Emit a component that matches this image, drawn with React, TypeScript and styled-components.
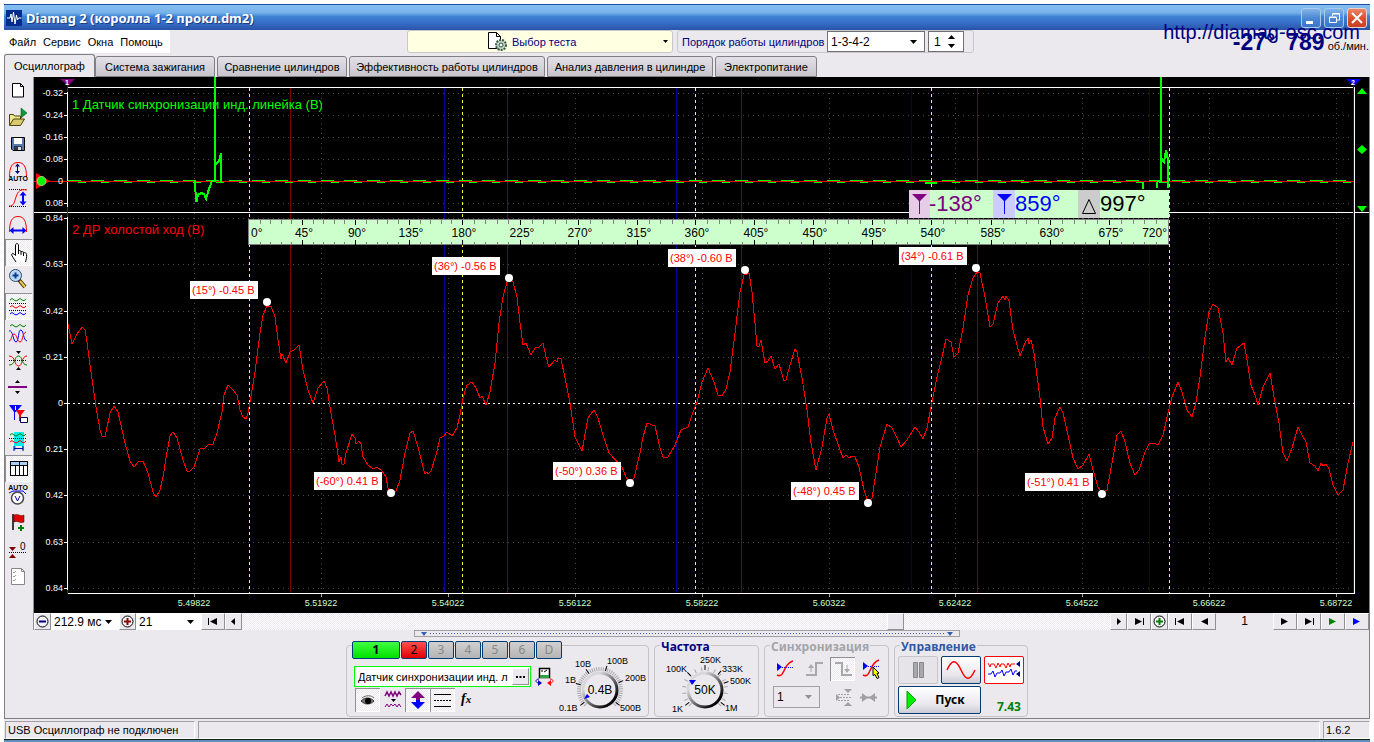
import React from 'react';
import styled, { createGlobalStyle, css } from 'styled-components';

const FACE = '#ebe9ed';
const UI = '"Liberation Sans", Arial, sans-serif';
const HEAD = '"Noto Sans", "Open Sans", sans-serif';
const checker = css`
  background: repeating-conic-gradient(#ffffff 0 25%, #ebe9ed 0 50%) 0 0 / 2px 2px;
`;

const Global = createGlobalStyle`
  * { box-sizing: border-box; }
  body { margin: 0; background: #fff; font: 11px/14px ${UI}; color: #000; }
  button, input, select { font: inherit; color: inherit; margin: 0; padding: 0; border-radius: 0; }
  svg { display: block; }
`;

const Window = styled.div`
  position: relative;
  margin: 4px 4px 0;
  background: ${FACE};
`;

const TitleBar = styled.header`
  display: flex;
  align-items: center;
  gap: 4px;
  height: 26px;
  padding: 0 3px 0 2px;
  border-top: 1px solid #1c50a8;
  background: linear-gradient(#86c0f0 0, #78b2ea 30%, #5c9ce0 38%, #3f82d4 46%, #3670c8 70%, #2a52a8 100%);
`;
const Title = styled.h1`
  flex: 1;
  margin: 0;
  font: bold 13px/18px ${HEAD};
  color: #fff;
  text-shadow: 1px 1px 0 #1a3c88;
`;
const CaptionButtons = styled.div`
  display: flex;
  gap: 3px;
`;
const CaptionButton = styled.button<{ $close?: boolean }>`
  width: 20px;
  height: 20px;
  border: 1px solid ${p => (p.$close ? '#f0d0d0' : '#a8ccf0')};
  border-radius: 3px;
  background: ${p => (p.$close ? 'linear-gradient(#e88868, #dc5030 50%, #c84020)' : 'linear-gradient(#84b4e8, #4c88d4 50%, #3c74c8)')};
`;

const TopRow = styled.div`
  display: flex;
  height: 24px;
  align-items: flex-start;
`;
const Menu = styled.nav`
  display: flex;
  align-items: center;
  gap: 7px;
  width: 166px;
  height: 23px;
  padding-left: 5px;
  background: #fff;
`;
const MenuItem = styled.button`
  border: 0;
  background: none;
`;
const TestButton = styled.button`
  display: flex;
  align-items: center;
  width: 266px;
  height: 23px;
  margin-left: 237px;
  padding: 0 4px 0 79px;
  gap: 4px;
  border: 1px solid #c8c8cc;
  border-radius: 3px;
  background: #ffffe1;
  color: #000080;
`;
const Grow = styled.span`
  flex: 1;
  text-align: left;
`;
const OrderBox = styled.div`
  display: flex;
  align-items: center;
  width: 297px;
  height: 23px;
  margin-left: 4px;
  padding-left: 4px;
  border: 1px solid #c8c8cc;
  border-radius: 3px;
`;
const OrderLabel = styled.label`
  flex: 1;
  color: #000080;
`;
const SelectWrap = styled.span<{ $w: number; $line?: string; $bg?: string; $h?: number }>`
  display: flex;
  position: relative;
  width: ${p => p.$w}px;
  height: ${p => p.$h ?? 17}px;
  border: ${p => (p.$line ? `1px solid ${p.$line}` : '0')};
  background: ${p => p.$bg ?? '#fff'};
`;
const Select = styled.select`
  flex: 1;
  width: 100%;
  padding-left: 3px;
  border: 0;
  background: none;
  appearance: none;
  font-size: 12px;
`;
const Arrow = styled.svg`
  position: absolute;
  right: 7px;
  top: calc(50% - 2px);
  pointer-events: none;
`;
const Spinner = styled.span`
  display: flex;
  align-items: center;
  width: 36px;
  height: 21px;
  margin: 0 9px 0 3px;
  padding-left: 5px;
  border: 1px solid #707074;
  background: #fff;
`;
const SpinInput = styled.input`
  width: 14px;
  border: 0;
  background: none;
  font-size: 12px;
`;
const SpinButton = styled.button`
  display: block;
  width: 10px;
  height: 9px;
  border: 0;
  background: none;
`;
const Rpm = styled.div`
  display: flex;
  align-items: baseline;
  margin-left: auto;
  padding-right: 1px;
  color: #000080;
  font: bold 23px/24px ${UI};
`;
const RpmUnit = styled.span`
  margin-left: 3px;
  color: #000;
  font: 11px/14px ${UI};
`;
const Gap = styled.span`
  width: 11px;
`;
const SiteLink = styled.a`
  position: absolute;
  right: 10px;
  top: 17px;
  z-index: 2;
  font: 20px/22px ${UI};
  color: #000080;
  text-decoration: none;
`;

const Tabs = styled.div`
  display: flex;
  align-items: flex-end;
  gap: 2px;
  height: 23px;
`;
const Tab = styled.button<{ $w: number; $on?: boolean }>`
  width: ${p => p.$w}px;
  height: ${p => (p.$on ? 23 : 21)}px;
  margin-right: ${p => (p.$on ? -2 : 0)}px;
  border: 1px solid #808084;
  border-bottom: ${p => (p.$on ? '0' : '1px solid #808084')};
  border-radius: 3px 3px 0 0;
  background: ${p => (p.$on ? FACE : 'linear-gradient(#e4e2e8, #c8c4cc)')};
`;

const Work = styled.main`
  display: flex;
  border-left: 1px solid #808084;
  border-right: 1px solid #808084;
`;
const Tools = styled.div`
  display: flex;
  flex-direction: column;
  width: 29px;
  border-right: 1px solid #909094;
`;
const ToolButton = styled.button<{ $on?: boolean }>`
  width: 27px;
  height: 27px;
  border: 0;
  background: none;
  ${p => p.$on && css`${checker} box-shadow: inset 1px 1px 0 #909094, inset -1px -1px 0 #fff;`}
  & > svg { margin-left: -1px; }
`;
const Right = styled.div`
  flex: 1;
  min-width: 0;
`;
const Scope = styled.svg`
  width: 100%;
  height: auto;
  background: #000;
  font-family: ${UI};
`;

const NavRow = styled.div`
  display: flex;
  height: 17px;
`;
const NavButton = styled.button<{ $w: number }>`
  display: flex;
  align-items: center;
  justify-content: center;
  width: ${p => p.$w}px;
  height: 17px;
  flex: none;
  background: ${FACE};
  border: 1px solid;
  border-color: #fff #909094 #909094 #fff;
`;
const Track = styled.div`
  flex: 1;
  display: flex;
  justify-content: flex-end;
  padding-right: 206px;
  ${checker}
`;
const Page = styled.span`
  width: 57px;
  text-align: center;
  font-size: 12px;
  line-height: 17px;
`;

const Bottom = styled.section`
  display: flex;
  flex-direction: column;
  align-items: center;
  height: 89px;
  border: solid #808084;
  border-width: 0 1px 1px;
`;
const Splitter = styled.div`
  display: flex;
  align-items: center;
  width: 546px;
  height: 7px;
  padding: 0 5px;
  gap: 3px;
  border: 1px solid #a0a0a4;
`;
const Dots = styled.span`
  flex: 1;
  height: 1px;
  background: repeating-linear-gradient(90deg, #3060b0 0 1px, transparent 1px 3px);
`;
const Groups = styled.div`
  display: flex;
  gap: 5px;
  margin-top: 8px;
`;
const Group = styled.div<{ $w: number; $pad?: string }>`
  position: relative;
  width: ${p => p.$w}px;
  height: 72px;
  padding: ${p => p.$pad ?? '0'};
  border: 1px solid #c4c4c8;
  border-radius: 4px;
`;
const GroupTitle = styled.h2<{ $c: string }>`
  position: absolute;
  left: 5px;
  top: -7px;
  margin: 0;
  padding: 0 1px;
  background: ${FACE};
  color: ${p => p.$c};
  font: bold 12px/16px ${HEAD};
`;
const ChannelGroup = styled(Group)`
  display: flex;
`;
const ChannelSide = styled.div`
  width: 211px;
  flex: none;
`;
const Row = styled.div<{ $gap?: number; $mt?: number; $ml?: number }>`
  display: flex;
  align-items: center;
  gap: ${p => p.$gap ?? 0}px;
  margin-top: ${p => p.$mt ?? 0}px;
  margin-left: ${p => p.$ml ?? 0}px;
`;
const Channel = styled.button<{ $w?: number; $bg?: string }>`
  width: ${p => p.$w ?? 26}px;
  height: 18px;
  border: 1px solid #003c74;
  border-radius: 2px;
  background: ${p => p.$bg ?? 'linear-gradient(#d0d0d0, #b4b4b4)'};
  color: ${p => (p.$bg ? '#000' : '#888')};
  font: ${p => (p.$w ? 'bold' : 'normal')} 12px/14px ${HEAD};
  flex: none;
`;
const Sensor = styled.div`
  display: flex;
  align-items: center;
  width: 177px;
  height: 21px;
  padding: 0 1px 0 3px;
  border: 1px solid #00ff00;
  background: #fff;
`;
const SensorInput = styled.input`
  flex: 1;
  min-width: 0;
  border: 0;
  background: none;
`;
const IconButton = styled.button<{ $w?: number; $h?: number; $on?: boolean }>`
  display: flex;
  align-items: center;
  justify-content: center;
  width: ${p => p.$w ?? 25}px;
  height: ${p => p.$h ?? 24}px;
  border: 0;
  background: none;
  ${p => p.$on && css`${checker} box-shadow: inset 1px 1px 0 #909094, inset -1px -1px 0 #fff;`}
`;
const KnobSvg = styled.svg`
  font: 9px ${UI};
`;
const Command = styled.button<{ $w?: number; $line: string; $bg?: string }>`
  display: flex;
  align-items: center;
  justify-content: center;
  width: ${p => p.$w ?? 40}px;
  height: 28px;
  border: 1px solid ${p => p.$line};
  border-radius: 2px;
  background: ${p => p.$bg ?? 'linear-gradient(#ffffff, #e8e6ec 70%, #cccad4)'};
  font: bold 12px/16px ${HEAD};
`;
const StartText = styled.span`
  margin: 0 8px 0 18px;
`;
const Load = styled.output`
  align-self: flex-end;
  margin-left: 16px;
  color: #008000;
  font: bold 12px/14px ${HEAD};
`;

const Status = styled.footer`
  display: flex;
  gap: 3px;
  height: 20px;
  padding: 2px 0 0 1px;
`;
const StatusCell = styled.div<{ $w?: number }>`
  ${p => (p.$w ? `width: ${p.$w}px;` : 'flex: 1;')}
  padding: 1px 2px;
  border: 1px solid;
  border-color: #a0a0a4 #fff #fff #a0a0a4;
`;
const Strip = styled.div`
  height: 4px;
  border-top: 1px solid #102010;
  background: #6090c0;
`;

/* ---------- oscilloscope data ---------- */

const TRACE =
  '68,324 72,344 77,334 82,327 85,330 87,342 90,365 96,407 100,430 102,436 105,437 110,413 114,406 118,412 125,443 130,461 134,467 138,462 143,461 148,473 153,492 156,497 160,490 163,477 167,452 170,436 173,432 177,438 183,460 187,471 189,472 194,467 200,449 205,448 209,444 213,444 217,433 222,412 224,395 228,385 230,387 233,390 237,395 240,410 243,417 246,419 248,413 250,402 255,372 260,333 263,315 267,306 271,306 275,317 278,340 281,359 282,354 286,363 290,352 294,350 299,345 303,370 308,390 313,403 318,388 324,381 327,388 331,413 335,435 338,455 339,462 341,457 342,464 344,464 346,453 352,434 355,438 356,444 359,441 361,444 363,457 368,465 373,469 377,467 382,471 386,477 388,488 391,493 396,491 400,480 405,453 410,433 413,431 418,447 423,467 425,474 427,472 428,474 431,471 436,455 440,438 444,436 447,432 452,436 457,428 460,415 463,398 467,385 472,382 476,388 480,398 482,396 486,405 490,392 495,363 499,323 503,297 507,282 509,278 513,282 517,297 520,323 523,345 526,343 531,355 535,348 539,347 543,343 546,357 549,367 555,360 557,362 558,358 561,359 565,378 570,403 575,437 582,451 588,418 594,410 598,418 603,435 609,453 622,467 626,477 630,483 634,478 640,453 643,437 647,423 655,426 660,448 663,457 668,457 675,445 681,430 688,427 692,415 697,402 702,382 708,368 714,382 718,395 722,396 726,389 730,372 735,333 740,292 744,275 749,273 752,292 755,323 757,346 759,346 761,340 765,363 768,361 771,356 775,369 779,364 784,381 786,380 790,365 795,349 797,352 802,378 807,410 811,443 816,470 822,447 827,418 829,414 833,430 839,447 843,458 846,455 849,458 852,456 855,457 859,467 864,490 868,502 872,498 876,473 880,447 887,424 892,428 897,438 901,447 907,440 915,427 919,432 923,439 927,428 932,402 937,377 942,357 946,339 951,342 954,357 958,353 963,328 968,295 973,278 977,272 980,273 985,297 990,327 993,324 998,303 1003,296 1005,300 1006,296 1009,301 1013,330 1020,356 1025,343 1028,338 1029,344 1031,340 1034,353 1040,398 1043,427 1048,444 1052,438 1055,418 1060,407 1063,413 1068,435 1073,458 1078,469 1083,465 1089,454 1093,470 1098,487 1102,493 1107,490 1112,463 1117,435 1121,431 1125,442 1130,463 1135,475 1139,470 1145,452 1149,444 1154,443 1158,445 1163,435 1168,413 1172,397 1178,382 1182,392 1187,410 1192,417 1196,402 1200,377 1205,337 1209,312 1213,304 1218,308 1223,333 1226,362 1228,358 1232,365 1237,348 1244,343 1247,360 1251,385 1255,395 1258,405 1263,387 1270,373 1274,397 1279,423 1283,453 1287,461 1292,448 1298,427 1302,435 1306,442 1310,463 1315,466 1318,471 1321,463 1323,466 1326,464 1329,469 1333,485 1338,495 1343,490 1348,463 1353,442';

const TOP_SCALE: [string, number][] = [['-0.32', 93], ['-0.24', 115], ['-0.16', 137], ['-0.08', 159], ['0', 181], ['0.08', 203]];
const LOW_SCALE: [string, number][] = [['-0.84', 218], ['-0.63', 264], ['-0.42', 311], ['-0.21', 357], ['0', 403], ['0.21', 449], ['0.42', 495], ['0.63', 542], ['0.84', 588]];
const SCALES = [...TOP_SCALE, ...LOW_SCALE];
const TIMES: [string, number][] = [['5.49822', 194], ['5.51922', 321], ['5.54022', 448], ['5.56122', 575], ['5.58222', 702], ['5.60322', 829], ['5.62422', 955], ['5.64522', 1082], ['5.66622', 1209], ['5.68722', 1336]];
const ANGLES = [249, 302, 355, 409, 462, 520, 578, 637, 695, 754, 813, 872, 931, 991, 1050, 1109, 1168];
const PEAKS: [string, number, number, number, number][] = [
  ['(15°) -0.45 В', 190, 281, 267, 302], ['(36°) -0.56 В', 432, 257, 509, 278], ['(38°) -0.60 В', 668, 249, 745, 270], ['(34°) -0.61 В', 899, 247, 976, 268],
  ['(-60°) 0.41 В', 314, 472, 391, 493], ['(-50°) 0.36 В', 553, 462, 630, 483], ['(-48°) 0.45 В', 791, 482, 868, 503], ['(-51°) 0.41 В', 1025, 473, 1102, 494],
];

function ScopeView() {
  return (
    <Scope viewBox="34 77 1335 536" role="img" aria-label="Осциллограмма">
      <g shapeRendering="crispEdges" fill="none">
        {SCALES.map(([, y]) => (
          <g key={y}>
            <path d={`M73 ${y + 0.5}H1353`} stroke="#484848" strokeDasharray="1 4" />
            <path d={`M64 ${y + 0.5}h4`} stroke="#fff" />
          </g>
        ))}
        {TIMES.map(([, x]) => (
          <g key={x}>
            <path d={`M${x + 0.5} 93V592`} stroke="#484848" strokeDasharray="1 4" />
            <path d={`M${x + 0.5} 593v4`} stroke="#a0a0a0" />
          </g>
        ))}
        <path d="M290.5 88V593M507.5 88V593M741.5 88V593M977.5 88V593" stroke="#7c0000" />
        <path d="M444.5 88V593M676.5 88V593" stroke="#000098" />
        <path d="M911.5 88V593M1149.5 88V593" stroke="#000060" />
        <path d="M249.5 88V593M462.5 88V593M695.5 88V593M931.5 88V593M1169.5 88V593" stroke="#ffff30" strokeDasharray="3 3" />
        <path d="M34 212.5H1369" stroke="#fff" />
        <path d="M68 87.5H1354.5V593.5H67.5V87" stroke="#fff" />
        <path d="M1353.5 85V593" stroke="#0000ff" />
        <path d="M67.5 82V92M67.5 207V217M67.5 590V594" stroke="#800080" />
        <path d="M68 403.5H1354" stroke="#fff" strokeDasharray="2 3" />
        <path d="M68 180.5H1353" stroke="#00ff00" strokeDasharray="13 10" />
        <path d="M78 182.5H1353" stroke="#00ff00" strokeDasharray="8 15" />
        <path d="M34 181.5H1354" stroke="#e81000" />
        <path d="M194.500 181L196.500 202L198 195L201 193L204 194L206 199L209 189L212 181H214.500V77V157L216 164L219 161L221 153V183" stroke="#00ff00" strokeWidth="2" />
        <path d="M925 183h12M1143 182V189M1157 182V188M1157 181H1161V77V158L1164 162L1166 150L1168 160V188" stroke="#00ff00" strokeWidth="2" />
        <polyline points={TRACE} stroke="#ff0000" />
      </g>
      <g fill="#fff" fontSize="9" textAnchor="end">
        {SCALES.map(([t, y]) => <text key={y} x="63" y={y + 3}>{t}</text>)}
      </g>
      <g fill="#ccffcc" fontSize="9" textAnchor="middle">
        {TIMES.map(([t, x]) => <text key={x} x={x} y="606">{t}</text>)}
      </g>
      <text x="72" y="109" fontSize="13" fill="#00ff00">1 Датчик синхронизации инд. линейка (В)</text>
      <text x="72" y="234" fontSize="13" fill="#ff0000">2 ДР холостой ход (В)</text>

      <path d="M60 79h15l-7 7z" fill="#800080" />
      <text x="67" y="85" fontSize="7" fontWeight="bold" fill="#fff" textAnchor="middle">1</text>
      <path d="M1346 79h15l-7 7z" fill="#0000ff" />
      <text x="1353" y="85" fontSize="7" fontWeight="bold" fill="#fff" textAnchor="middle">2</text>
      <path d="M36 173v16l14-8z" fill="#ff0000" />
      <circle cx="41.500" cy="181" r="4.500" fill="#00ff00" stroke="#c0c0a0" />
      <path d="M1362 88l5 6h-10zM1362 145l5 4.500l-5 4.500l-5-4.500zM1357 206h10l-5 6z" fill="#00ff00" />

      <path d="M248 219h921v26h-921z" fill="#ccffcc" />
      <path d="M248 219.500H1169M248 244.500H1169M248.500 219V245M1168.500 219V245" stroke="#808080" shapeRendering="crispEdges" />
      {ANGLES.map((x, i) => (
        <g key={x} shapeRendering="crispEdges">
          {i > 0 && i < 16 && <path d={`M${x + 0.5} 220v5M${x + 0.5} 240v5`} stroke="#000" />}
          {i < 16 && [1, 2, 3, 4].map(k => {
            const m = Math.round(x + ((ANGLES[i + 1] - x) * k) / 5) + 0.5;
            return <path key={k} d={`M${m} 220v4M${m} 242v3`} stroke="#808080" />;
          })}
        </g>
      ))}
      <g fontSize="12" fill="#000">
        {ANGLES.map((x, i) => (
          <text key={x} x={i === 0 ? 251 : i === 16 ? 1167 : x + 2} y="237" textAnchor={i === 0 ? 'start' : i === 16 ? 'end' : 'middle'}>
            {i * 45}°
          </text>
        ))}
      </g>

      <path d="M909 190h260v28h-260z" fill="#ccffcc" />
      <path d="M909 190h21v28h-21z" fill="#e6cce6" />
      <path d="M993 190h22v28h-22z" fill="#ccccff" />
      <path d="M1078 190h22v28h-22z" fill="#cccccc" />
      <path d="M912 194h15l-7 7v13h-1v-13z" fill="#800080" />
      <path d="M997 194h15l-7 7v13h-1v-13z" fill="#0000ff" />
      <path d="M1082.500 213.500h13l-6.500-14z" fill="none" stroke="#000" />
      <g fontSize="22">
        <text x="929" y="211" fill="#800080">-138°</text>
        <text x="1015" y="211" fill="#0000ff">859°</text>
        <text x="1100" y="211" fill="#000">997°</text>
      </g>

      {PEAKS.map(([t, bx, by, cx, cy]) => (
        <g key={cx}>
          <path d={`M${bx} ${by}h68v18h-68z`} fill="#fff" />
          <text x={bx + 2} y={by + 13} fontSize="11" fill="#ff0000">{t}</text>
          <circle cx={cx} cy={cy} r="4" fill="#fff" />
        </g>
      ))}
    </Scope>
  );
}

/* ---------- icons ---------- */

const auto = (y: number) => <text x="14" y={y} fontSize="7" fontWeight="bold" textAnchor="middle" fontFamily="Liberation Sans, sans-serif">AUTO</text>;
const wave = (y: number, c: string) => <path d={`M6 ${y}q2-3 4 0q2 2 4 0q2-3 4 0q2 2 4-1`} stroke={c} fill="none" />;
const dots = (y: number) => <path d={`M5 ${y}.5H23`} stroke="#000" strokeDasharray="1 1" shapeRendering="crispEdges" />;

const TOOLS: { name: string; on?: boolean; art: React.ReactNode }[] = [
  { name: 'Новый', art: <path d="M8.500 6.500h8l3 3v10.500h-11zM16.500 6.500v3h3" fill="#fff" stroke="#000" /> },
  { name: 'Открыть', art: <><path d="M5.500 21V10.500h4l1 1.500h6v3" fill="#f0e890" stroke="#4c4400" /><path d="M5.500 21.500l4-6.500h11l-4 6.500z" fill="#d8c870" stroke="#4c4400" /><path d="M17 4v10l6-5z" fill="#00a030" stroke="#004818" strokeWidth=".5" /></> },
  { name: 'Сохранить', art: <><path d="M7.500 6.500h13v13h-11.500l-1.500-1.500z" fill="#5878b0" stroke="#000" /><path d="M10 7h8v6h-8z" fill="#fff" /><path d="M10 15h8v4h-8z" fill="#303848" /><path d="M14 16h3v3h-3z" fill="#ddd" /></> },
  { name: 'Автомасштаб', art: <><path d="M5.500 19C5.500 9 8 4.500 14 4.500S22.500 9 22.500 19" fill="none" stroke="#f00" /><path d="M13.500 6v9" stroke="#000080" /><path d="M11 8.500l2.500-3l2.500 3zM11 13l2.500 3l2.500-3z" fill="#000080" />{auto(23)}</> },
  { name: 'Высота', art: <>{dots(4)}{dots(21)}<path d="M5 21c5 0 5-3 7-9s4-8 11-7" fill="none" stroke="#f00" /><path d="M19 9v9" stroke="#00f" strokeWidth="2" /><path d="M15.500 10.500l3.500-4l3.500 4zM15.500 16.500l3.500 4l3.500-4z" fill="#00f" /></> },
  { name: 'Ширина', art: <><path d="M5.500 20C5.500 9 8 4.500 14 4.500S22.500 9 22.500 20" fill="none" stroke="#f00" /><path d="M8 18.500h12" stroke="#00f" strokeWidth="2" /><path d="M9.500 15v7l-4-3.500zM18.500 15v7l4-3.500z" fill="#00f" /></> },
  { name: 'Рука', on: true, art: <path d="M12 23C10 20 8 17 7.500 15.500c.5-1.500 2.500-1 4 1V6c.5-2 2.500-2 3 0v6c1-1 2.500-.5 2.500 1c1-1 2.500-.5 2.500 1c1.500-1 3 0 3 1.500c.5 3-.5 5-1 7.500M14.500 12v3M17 13v3M19.500 14v3" fill="#fff" stroke="#000" /> },
  { name: 'Лупа', art: <><path d="M15 14l6 7" stroke="#403000" strokeWidth="4" /><path d="M16 15l5 6" stroke="#f0c850" strokeWidth="2" /><circle cx="11.500" cy="9.500" r="6" fill="#b8dcf8" stroke="#304860" /><path d="M8.500 9.500h6M11.500 6.500v6" stroke="#103c90" strokeWidth="2" /></> },
  { name: 'Раздельно', on: true, art: <>{wave(7, '#008000')}{dots(10)}{wave(14, '#f00')}{dots(17)}{wave(21, '#00f')}</> },
  { name: 'Вместе', art: <>{wave(6, '#008000')}<path d="M5 11c4-2 4 11 7 11s2-13 5-12s2 10 6 11" fill="none" stroke="#00f" /><path d="M5 21c3 0 2-7 5-7s3 8 6 8s2-9 6-10" fill="none" stroke="#f00" /></> },
  { name: 'Центр', art: <>{dots(13)}<path d="M5 9c7 0 5 10 9.500 10S17 9 23 9" fill="none" stroke="#f00" /><path d="M5 18c7 0 5-9 9.500-9S17 18 23 18" fill="none" stroke="#008000" /><path d="M12 4h5l-2.500 3zM12 23h5l-2.500-3z" /></> },
  { name: 'Ноль', art: <><path d="M4 12h19v2H4z" fill="#800080" /><path d="M11 9h5l-2.500-3zM11 17h5l-2.500 3z" /></> },
  { name: 'Маркеры', art: <><path d="M5 4h13l-6 7h-1v8h-1V11z" fill="#00f" /><path d="M12 9h9l-4 5v6h-2v-6z" fill="#f00" /><path d="M11.500 5v4" stroke="#fff" /><path d="M16.500 16.500h7v5h-7z" fill="#fff" stroke="#004" /></> },
  { name: 'Участок', art: <><path d="M10 4h10v18h-2v-4h-6v4h-2z" fill="#00f0f0" />{wave(7, '#008000')}{dots(10)}{wave(14, '#f00')}<path d="M10 20.500h9M10 18v5M19 18v5" stroke="#00a" /></> },
  { name: 'Таблица', on: true, art: <g shapeRendering="crispEdges"><path d="M6 7h18v14H6z" fill="#fff" /><path d="M6 7h18v3H6z" fill="#a8d0f8" /><path d="M6.500 6.500h17v14h-17zM6 10.500h18M11 10v11M15 7v14M19.500 10v11" fill="none" stroke="#000" /></g> },
  { name: 'Авто вольтметр', art: <>{auto(8)}<path d="M5 11l4-2h10l3 3" stroke="#00f" fill="none" /><circle cx="13.500" cy="16" r="6" fill="#fff" stroke="#444" strokeWidth="1.500" /><path d="M11 14l2.500 5l2.500-5" fill="none" stroke="#00a" /></> },
  { name: 'Метка', art: <><path d="M9 5v16" stroke="#000" strokeWidth="1.500" /><path d="M10 6c4-2 6 2 10 0v7c-4 2-6-2-10 0z" fill="#e00000" stroke="#400" strokeWidth=".5" /><path d="M14 19h6M17 16v6" stroke="#008000" strokeWidth="2" /></> },
  { name: 'Сброс', art: <>{dots(16)}<path d="M5 11h7l-3.500 4zM5 22h7l-3.500-4z" fill="#800000" /><text x="16" y="14" fontSize="10" fontFamily="Liberation Sans, sans-serif">0</text></> },
  { name: 'Список', art: <><path d="M7.500 5.500h10l3 3v13h-13zM17.500 5.500v3h3" fill="#fff" stroke="#888" /><path d="M9 9l1 1l2-2M9 13l1 1l2-2M9 17l1 1l2-2" stroke="#999" fill="none" /></> },
];

const Down = ({ c = '#000' }: { c?: string }) => <Arrow width="7" height="4"><path d="M0 0h7l-3.500 4z" fill={c} /></Arrow>;
const Tri = ({ dir, bar, c = '#000' }: { dir: 'l' | 'r'; bar?: boolean; c?: string }) => (
  <svg width="12" height="9">
    {dir === 'l' ? <path d="M10 1v7L3 4.500z" fill={c} /> : <path d="M2 1v7l7-3.500z" fill={c} />}
    {bar && <path d={dir === 'l' ? 'M1 1h1v7H1z' : 'M10 1h1v7h-1z'} fill={c} />}
  </svg>
);
const Round = ({ c, plus }: { c: string; plus?: boolean }) => (
  <svg width="13" height="13">
    <circle cx="6.500" cy="6.500" r="5.500" fill="#f4f4f8" stroke="#000" />
    <path d={plus ? 'M3 6.500h7M6.500 3v7' : 'M3 6.500h7'} stroke={c} strokeWidth="2" />
  </svg>
);

type Mark = [string, number, number, number];
function Knob({ w, cx, value, marks, pointer, dense }: { w: number; cx: number; value: string; marks: Mark[]; pointer: string; dense?: boolean }) {
  const step = dense ? 6 : 18;
  const ticks: number[] = [];
  for (let a = -135; a <= 135; a += step) ticks.push(a);
  return (
    <KnobSvg width={w} height="70" viewBox={`0 0 ${w} 70`}>
      <defs>
        <linearGradient id={`rim${cx}`} x1="0" y1="0" x2="1" y2="1">
          <stop offset=".25" stopColor="#d8d8dc" />
          <stop offset=".85" stopColor="#000" />
        </linearGradient>
      </defs>
      {ticks.map(a => <path key={a} d={`M${cx} 25v-4`} stroke="#a8a8ac" transform={`rotate(${a} ${cx} 44)`} />)}
      {marks.map(([t, , , a]) => <path key={t} d={`M${cx} 24v-5`} stroke="#000" transform={`rotate(${a} ${cx} 44)`} />)}
      <circle cx={cx} cy="44" r="17" fill={FACE} stroke={`url(#rim${cx})`} strokeWidth="3" />
      <path d={pointer} fill="#0000ff" />
      <text x={cx} y="48" fontSize="12" textAnchor="middle">{value}</text>
      {marks.map(([t, x, y]) => <text key={t} x={x} y={y}>{t}</text>)}
    </KnobSvg>
  );
}

export default function App() {
  return (
    <>
      <Global />
      <Window>
        <TitleBar>
          <svg width="16" height="16"><path d="M0 0h16v16H0z" fill="#002c90" /><path d="M1 8h3l1-4l1 8l1.500-10l1.500 12l1.500-9l1 5l1-2h3" fill="none" stroke="#fff" /></svg>
          <Title>Diamag 2 (королла 1-2 прокл.dm2)</Title>
          <CaptionButtons>
            <CaptionButton aria-label="Свернуть"><svg width="18" height="18"><path d="M4 12h7v3H4z" fill="#fff" /></svg></CaptionButton>
            <CaptionButton aria-label="Восстановить"><svg width="18" height="18"><path d="M7.500 7V5h7v6h-3M4.500 8.500h7v5h-7zM4.500 8h7M7.500 4.500h7" fill="none" stroke="#fff" /></svg></CaptionButton>
            <CaptionButton $close aria-label="Закрыть"><svg width="18" height="18"><path d="M4 4l10 10M14 4L4 14" stroke="#fff" strokeWidth="2" /></svg></CaptionButton>
          </CaptionButtons>
        </TitleBar>

        <TopRow>
          <Menu>
            {['Файл', 'Сервис', 'Окна', 'Помощь'].map(t => <MenuItem key={t}>{t}</MenuItem>)}
          </Menu>
          <TestButton>
            <svg width="21" height="20"><path d="M1.500 .5h8l4 4v12h-12zM9.500 .5v4h4" fill="#fff" stroke="#000" /><circle cx="14" cy="13" r="5" fill="#c0dcc0" stroke="#405848" strokeWidth="2" strokeDasharray="2 1" /><circle cx="14" cy="13" r="2" fill="#fff" stroke="#345" /></svg>
            <Grow>Выбор теста</Grow>
            <svg width="5" height="3"><path d="M0 0h5l-2.500 3z" /></svg>
          </TestButton>
          <OrderBox>
            <OrderLabel htmlFor="order">Порядок работы цилиндров</OrderLabel>
            <SelectWrap $w={98} $h={21} $line="#707074"><Select id="order"><option>1-3-4-2</option></Select><Down /></SelectWrap>
            <Spinner>
              <SpinInput aria-label="Цилиндр" defaultValue="1" />
              <span>
                <SpinButton aria-label="Больше"><svg width="7" height="5"><path d="M0 4h7L3.500 0z" /></svg></SpinButton>
                <SpinButton aria-label="Меньше"><svg width="7" height="5"><path d="M0 0h7L3.500 4z" /></svg></SpinButton>
              </span>
            </Spinner>
          </OrderBox>
          <Rpm>-27°<Gap />789<RpmUnit>об./мин.</RpmUnit></Rpm>
        </TopRow>
        <SiteLink href="http://diamag-osc.com">http://diamag-osc.com</SiteLink>

        <Tabs role="tablist">
          <Tab role="tab" $on $w={91}>Осциллограф</Tab>
          <Tab role="tab" $w={120}>Система зажигания</Tab>
          <Tab role="tab" $w={130}>Сравнение цилиндров</Tab>
          <Tab role="tab" $w={196}>Эффективность работы цилиндров</Tab>
          <Tab role="tab" $w={166}>Анализ давления в цилиндре</Tab>
          <Tab role="tab" $w={102}>Электропитание</Tab>
        </Tabs>

        <Work>
          <Tools>
            {TOOLS.map(t => (
              <ToolButton key={t.name} $on={t.on} aria-label={t.name}><svg width="28" height="27">{t.art}</svg></ToolButton>
            ))}
          </Tools>
          <Right>
            <ScopeView />
            <NavRow>
              <NavButton $w={17} aria-label="Уменьшить"><Round c="#000080" /></NavButton>
              <SelectWrap $w={68}><Select aria-label="Развёртка"><option>212.9 мс</option></Select><Down /></SelectWrap>
              <NavButton $w={17} aria-label="Увеличить"><Round c="#900000" plus /></NavButton>
              <SelectWrap $w={65}><Select aria-label="Масштаб"><option>21</option></Select><Down /></SelectWrap>
              <NavButton $w={24} aria-label="В начало"><Tri dir="l" bar /></NavButton>
              <NavButton $w={17} aria-label="Влево"><svg width="5" height="7"><path d="M4 0v7L0 3.500z" /></svg></NavButton>
              <Track><NavButton $w={17} aria-label="Ползунок" /></Track>
              <NavButton $w={17} aria-label="Вправо"><svg width="5" height="7"><path d="M1 0v7l4-3.500z" /></svg></NavButton>
              <NavButton $w={24} aria-label="В конец"><Tri dir="r" bar /></NavButton>
              <NavButton $w={17} aria-label="Добавить"><Round c="#008000" plus /></NavButton>
              <NavButton $w={24} aria-label="Первая"><Tri dir="l" bar /></NavButton>
              <NavButton $w={24} aria-label="Предыдущая"><Tri dir="l" /></NavButton>
              <Page>1</Page>
              <NavButton $w={24} aria-label="Следующая"><Tri dir="r" /></NavButton>
              <NavButton $w={24} aria-label="Последняя"><Tri dir="r" bar /></NavButton>
              <NavButton $w={24} aria-label="Воспроизвести"><Tri dir="r" c="#008000" /></NavButton>
              <NavButton $w={24} aria-label="Далее"><Tri dir="r" c="#0000ff" /></NavButton>
            </NavRow>
          </Right>
        </Work>

        <Bottom>
          <Splitter>
            <svg width="7" height="4"><path d="M1 0h6l-3 4z" fill="#3060b0" /></svg>
            <Dots />
            <svg width="7" height="4"><path d="M0 0h6l-3 4z" fill="#3060b0" /></svg>
          </Splitter>
          <Groups>
            <ChannelGroup $w={303}>
              <ChannelSide>
                <Row $gap={1} $mt={-5} $ml={5}>
                  <Channel $w={48} $bg="linear-gradient(#40ff40, #00e000)">1</Channel>
                  <Channel $bg="linear-gradient(#ff5050, #e00000)">2</Channel>
                  {['3', '4', '5', '6', 'D'].map(t => <Channel key={t}>{t}</Channel>)}
                </Row>
                <Row $gap={4} $mt={7} $ml={7}>
                  <Sensor>
                    <SensorInput aria-label="Датчик" defaultValue="Датчик синхронизации инд. л" />
                    <NavButton $w={17} aria-label="Выбрать датчик"><svg width="9" height="2"><path d="M0 0h2v2H0zM3.500 0h2v2h-2zM7 0h2v2H7z" /></svg></NavButton>
                  </Sensor>
                  <svg width="19" height="20"><path d="M4.500 1.500h10v9h-10z" fill="#fff" stroke="#000" strokeWidth="1.500" /><path d="M5 8h9v3H5z" fill="#30a040" /><path d="M7 3v2M9 5l3-2" stroke="#000" fill="none" /><path d="M4 12C0 12 0 16 4 16" fill="none" stroke="#0000c0" /><path d="M3 13v6l4-3z" fill="#0000c0" /><path d="M15 12c4 0 4 4 0 4" fill="none" stroke="#ff0000" /><path d="M16 13v6l-4-3z" fill="#ff0000" /></svg>
                </Row>
                <Row $mt={1} $ml={8}>
                  <IconButton $on aria-label="Показать"><svg width="16" height="14"><path d="M2 5c4-3 9-3 12 0" fill="none" stroke="#666" /><path d="M1 8c4-4 9-4 13 0c-4 4-9 4-13 0z" fill="#787870" stroke="#333" /><circle cx="8" cy="8" r="3" fill="#000" /></svg></IconButton>
                  <IconButton aria-label="Инверсия"><svg width="18" height="20"><path d="M1 6l2-4l2 4l2-4l2 4l2-4l2 4l2-4l2 3" fill="none" stroke="#800080" strokeWidth="1.500" /><path d="M1 17l2-3l2 3l2-3l2 2l2-2l2 3l2-3l2 3" fill="none" stroke="#800080" /><path d="M7 9h5l-2.500 3z" /></svg></IconButton>
                  <IconButton $on aria-label="Смещение"><svg width="16" height="20"><path d="M8 1l7 7h-5v2H6V8H1z" fill="#800080" /><path d="M8 19l7-7h-5v-2H6v2H1z" fill="#0000ff" /></svg></IconButton>
                  <IconButton $on aria-label="Линии"><svg width="19" height="16" shapeRendering="crispEdges"><path d="M1 2.500h17M1 14.500h17" stroke="#000" /><path d="M1 8.500h17" stroke="#000" strokeDasharray="2 1" /></svg></IconButton>
                  <IconButton aria-label="Функция"><svg width="16" height="18"><text x="1" y="12" fontFamily="Liberation Serif, serif" fontStyle="italic" fontWeight="bold" fontSize="14">f<tspan fontSize="11">x</tspan></text></svg></IconButton>
                </Row>
              </ChannelSide>
              <Knob
                w={90} cx={42} value="0.4В" dense
                pointer="M26 53l3-5l3 3z"
                marks={[['10В', 17, 21, -34], ['100В', 49, 18, 16], ['1В', 7, 37, -75], ['200В', 67, 35, 68], ['0.1В', 1, 65, -128], ['500В', 62, 65, 128]]}
              />
            </ChannelGroup>
            <Group $w={105}>
              <GroupTitle $c="#000080">Частота</GroupTitle>
              <Knob
                w={103} cx={50} value="50K"
                pointer="M34 34h7l-4 5z"
                marks={[['100K', 11, 26, -45], ['250K', 45, 17, 0], ['333K', 67, 26, 40], ['500K', 75, 38, 70], ['1K', 17, 66, -128], ['1M', 70, 65, 128]]}
              />
            </Group>
            <Group $w={125} $pad="11px 0 0 7px">
              <GroupTitle $c="#a4a4a8">Синхронизация</GroupTitle>
              <Row $gap={4}>
                <IconButton aria-label="Уровень"><svg width="18" height="20"><path d="M1 4v8l5-4z" fill="#00f" /><path d="M4 8.500h14" stroke="#00f" strokeDasharray="1 1" /><path d="M1 16c8 4 6-12 16-14" fill="none" stroke="#f00" strokeWidth="1.500" /></svg></IconButton>
                <IconButton aria-label="Фронт"><svg width="18" height="18"><path d="M1 15h10V3h7" fill="none" stroke="#a8a8ac" strokeWidth="2" /><path d="M3 8l3-4l3 4z" fill="#a8a8ac" /><path d="M6 7v5" stroke="#a8a8ac" /></svg></IconButton>
                <IconButton $on aria-label="Спад"><svg width="18" height="18"><path d="M1 3h7v12h10" fill="none" stroke="#a8a8ac" strokeWidth="2" /><path d="M13 5v5" stroke="#a8a8ac" /><path d="M10 9l3 4l3-4z" fill="#a8a8ac" /></svg></IconButton>
                <IconButton aria-label="Курсор"><svg width="19" height="20"><path d="M1 3v8l5-4z" fill="#00f" /><path d="M4 7.500h14" stroke="#00f" strokeDasharray="1 1" /><path d="M1 16c8 4 6-12 16-15" fill="none" stroke="#f00" strokeWidth="1.500" /><path d="M11 8l6 6l-2 .5l2 4l-2 1l-2-4l-2 1z" fill="#ff0" stroke="#000" /></svg></IconButton>
              </Row>
              <Row $mt={5} $ml={1}>
                <SelectWrap $w={47} $h={22} $line="#a0a0a4" $bg={FACE}><Select aria-label="Канал синхронизации"><option>1</option></Select><Down c="#909094" /></SelectWrap>
                <Gap />
                <IconButton $h={22} aria-label="Задержка"><svg width="18" height="17"><path d="M1 5v7l4-3.500zM9 0h8l-4 4zM9 17h8l-4-4z" fill="#a0a0a4" /><path d="M3 5.500h12M5 8.500h12M3 11.500h12" stroke="#a0a0a4" strokeDasharray="2 1" /></svg></IconButton>
                <IconButton $h={22} aria-label="Сжать"><svg width="19" height="9"><path d="M1 4.500h17" stroke="#a0a0a4" strokeWidth="2" /><path d="M3 0v9l6-4.500zM16 0v9l-6-4.500z" fill="#a0a0a4" /></svg></IconButton>
              </Row>
            </Group>
            <Group $w={134} $pad="10px 0 0 3px">
              <GroupTitle $c="#3058a8">Управление</GroupTitle>
              <Row $gap={3}>
                <Command $line="#c8c8cc" $bg="#e6e4e8" aria-label="Пауза"><svg width="11" height="16"><path d="M.5 .5h4v15h-4zM6.500 .5h4v15h-4z" fill="#a8a8ac" stroke="#888" /></svg></Command>
                <Command $line="#003c74" aria-label="Осциллограмма"><svg width="30" height="22"><path d="M1 11C6 0 10 0 15 11S24 22 29 11" fill="none" stroke="#f00" strokeWidth="1.500" /></svg></Command>
                <Command $line="#ff0000" $bg="#fff" aria-label="Запись"><svg width="34" height="22"><path d="M1 4l2 4l1-3h3l2 4l2-5l2 4l1-3h3l2 4l2-5l2 4l1-3h4" fill="none" stroke="#f00" /><path d="M1 15h3l2-3l2 6l2-4h3l2-3l2 6l2-4h3l2-3l2 6l2-4h2" fill="none" stroke="#00f" /><path d="M33 2v6l-4-3zM33 12v6l-4-3z" fill="#008" /></svg></Command>
              </Row>
              <Row $mt={2}>
                <Command $w={83} $line="#003c74"><svg width="11" height="20"><path d="M1 1v18l9-9z" fill="#00f000" stroke="#00a000" /></svg><StartText>Пуск</StartText></Command>
                <Load>7.43</Load>
              </Row>
            </Group>
          </Groups>
        </Bottom>

        <Status>
          <StatusCell $w={190}>USB Осциллограф не подключен</StatusCell>
          <StatusCell />
          <StatusCell $w={47}>1.6.2</StatusCell>
        </Status>
        <Strip />
      </Window>
    </>
  );
}
